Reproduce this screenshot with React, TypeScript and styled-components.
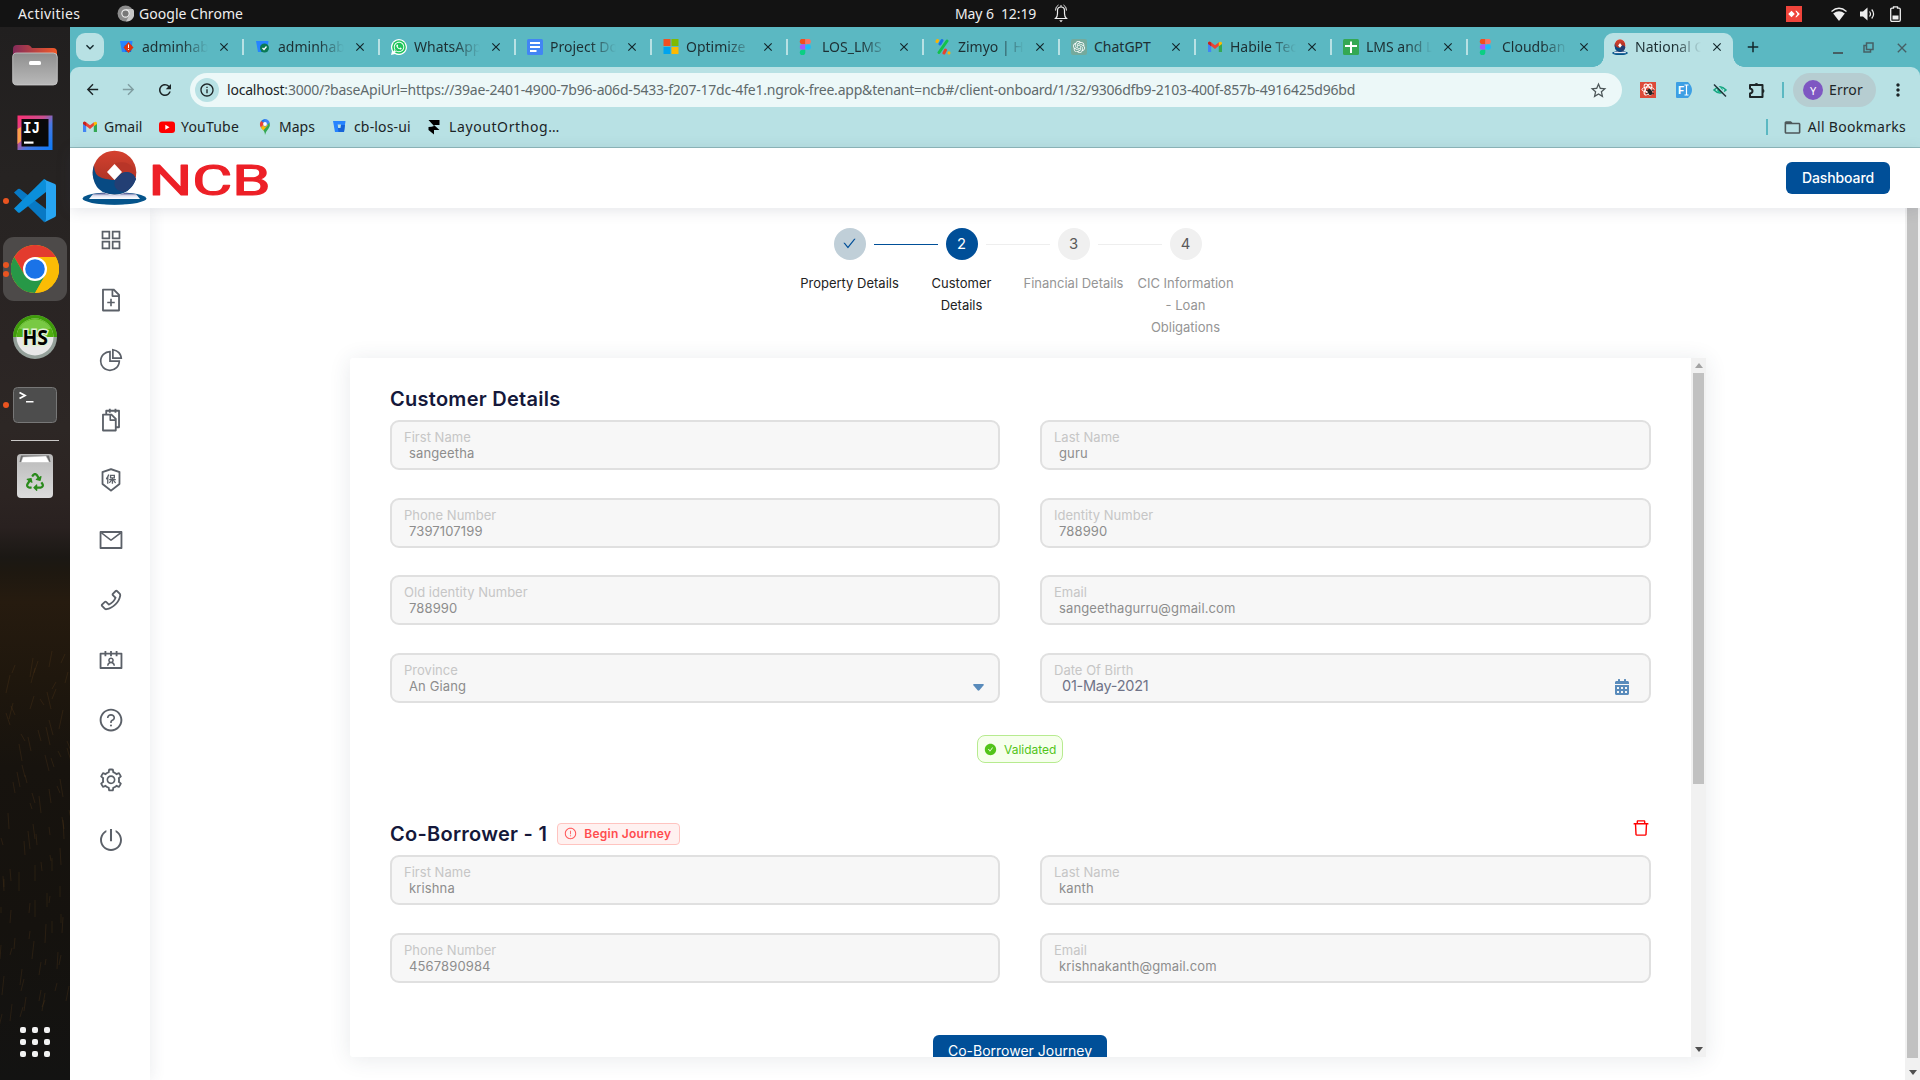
import React from 'react';
import styled, { createGlobalStyle, css } from 'styled-components';
import {
  AiOutlineAppstore, AiOutlineFileAdd, AiOutlinePieChart, AiOutlineSnippets, AiOutlineInsurance,
  AiOutlineMail, AiOutlinePhone, AiOutlineContacts, AiOutlineQuestionCircle, AiOutlineSetting,
  AiOutlinePoweroff, AiOutlineDelete, AiOutlineCheck, AiFillCheckCircle, AiOutlineExclamationCircle,
} from 'react-icons/ai';
import {
  MdArrowBack, MdArrowForward, MdRefresh, MdInfoOutline, MdStarBorder, MdMoreVert,
  MdOutlineExtension, MdClose, MdAdd, MdKeyboardArrowDown, MdFolderOpen,
} from 'react-icons/md';
import { FaCalendarAlt, FaRecycle, FaWhatsapp } from 'react-icons/fa';
import { SiOpenai } from 'react-icons/si';

const uiFont = '"Noto Sans", "Open Sans", sans-serif';
const appFont = 'Inter, Roboto, sans-serif';
const navy = '#004f98';

const GlobalStyle = createGlobalStyle`
  * { box-sizing: border-box; }
  body { margin: 0; background: #fff; overflow: hidden; }
  svg { display: block; flex: none; }
`;

const Desktop = styled.div`
  width: 1920px;
  height: 1080px;
  display: grid;
  grid-template: 27px 1053px / 70px 1850px;
  overflow: hidden;
  font-family: ${uiFont};
`;

/* ---------- System bar ---------- */
const SystemBar = styled.header`
  grid-column: 1 / 3;
  display: grid;
  grid-template-columns: 955px 1fr auto;
  align-items: center;
  background: #131313;
  color: #eeeeee;
`;
const BarGroup = styled.div<{ $pad?: string; $gap?: number }>`
  display: flex;
  align-items: center;
  gap: ${p => p.$gap ?? 0}px;
  padding: ${p => p.$pad ?? '0'};
`;
const Label = styled.span<{ $track?: number; $width?: number; $ml?: number }>`
  flex: none;
  margin-left: ${p => p.$ml ?? 0}px;
  font-size: 14px;
  line-height: 20px;
  letter-spacing: ${p => p.$track ?? 0}px;
  white-space: pre;
  ${p => p.$width && css`width: ${p.$width}px;`}
`;

/* ---------- Dock ---------- */
const Dock = styled.aside`
  position: relative;
  display: flex;
  flex-direction: column;
  align-items: center;
  background: linear-gradient(#211f1f 0, #262322 150px, #2b2524 320px, #2d2725 400px, #2c2422 470px, #292120 500px, #1b1814 530px, #1e1810 545px, #261b0f 575px, #1f170d 650px, #17130e 740px, #15120e 900px, #131312 1053px);
`;
const Backdrop = styled.svg`
  position: absolute;
  inset: 0;
`;
const DockItem = styled.div<{ $h: number; $active?: boolean; $mt?: number }>`
  position: relative;
  display: flex;
  align-items: center;
  justify-content: center;
  width: 64px;
  height: ${p => p.$h}px;
  margin-top: ${p => p.$mt ?? 0}px;
  border-radius: 11px;
  background: ${p => (p.$active ? '#4d4a49' : 'transparent')};
`;
const RunDots = styled.div`
  position: absolute;
  left: 0;
  top: 0;
  height: 100%;
  display: flex;
  flex-direction: column;
  justify-content: center;
  gap: 3px;
`;
const RunDot = styled.i`
  width: 6px;
  height: 6px;
  border-radius: 50%;
  background: #e95420;
`;
const DockRule = styled.hr`
  width: 48px;
  height: 1px;
  margin: 3px 0 0;
  border: 0;
  background: #c9c7c6;
`;
const AppsGrid = styled.div`
  position: relative;
  display: grid;
  grid-template-columns: repeat(3, 6px);
  gap: 6px;
  margin: auto 0 23px;
  i { height: 6px; border-radius: 2px; background: #f2f2f2; }
`;

/* ---------- Browser chrome ---------- */
const Browser = styled.div`
  display: flex;
  flex-direction: column;
  min-width: 0;
  background: #5bb8c2;
`;
const TabStrip = styled.div`
  display: flex;
  height: 40px;
  padding: 6px 0 0 6px;
`;
const TabMenu = styled.button`
  display: grid;
  place-items: center;
  width: 28px;
  height: 28px;
  margin-right: 4px;
  padding: 0;
  border: 0;
  border-radius: 9px;
  background: #b8e1e4;
`;
const Tab = styled.div<{ $active?: boolean; $last?: boolean }>`
  position: relative;
  display: flex;
  align-items: center;
  width: ${p => (p.$active ? 129 : 136)}px;
  height: ${p => (p.$active ? 34 : 28)}px;
  padding: ${p => (p.$active ? '0 0 6px 8px' : '0 0 0 11px')};
  border-right: 2px solid transparent;
  border-image: ${p => (p.$active || p.$last ? 'none' : 'linear-gradient(transparent 6px, #b8e1e4 6px, #b8e1e4 22px, transparent 22px) 0 2 0 0')};
  ${p => p.$active && css`
    border: 0;
    border-radius: 9px 9px 0 0;
    background: #b8e1e4;
    &::before, &::after {
      content: '';
      position: absolute;
      bottom: 0;
      width: 11px;
      height: 11px;
    }
    &::before { left: -11px; background: radial-gradient(circle at 0 0, transparent 10.5px, #b8e1e4 11px); }
    &::after { right: -11px; background: radial-gradient(circle at 100% 0, transparent 10.5px, #b8e1e4 11px); }
  `}
`;
const TabTitle = styled.span<{ $whole?: boolean }>`
  width: 67px;
  margin-left: 7px;
  overflow: hidden;
  white-space: nowrap;
  color: #1d2f33;
  font-size: 14px;
  line-height: 20px;
  mask-image: ${p => (p.$whole ? 'none' : 'linear-gradient(90deg, #000 40px, transparent 66px)')};
`;
const TabClose = styled(MdClose)`
  margin-left: 8px;
  width: 14px;
  height: 14px;
  color: #13272b;
`;
const Toolbar = styled.div`
  display: flex;
  align-items: center;
  height: 46px;
  padding: 0 12px 0 14px;
  background: #b8e1e4;
  border-radius: 9px 9px 0 0;
  color: #1d2527;
`;
const NavIcon = styled.div<{ $dim?: boolean }>`
  width: 36px;
  padding-bottom: 1px;
  color: ${p => (p.$dim ? '#7f9da0' : '#1b2426')};
`;
const AddressBar = styled.div`
  display: flex;
  align-items: center;
  width: 1432px;
  height: 34px;
  margin-left: -2px;
  padding: 0 14px 0 5px;
  border-radius: 17px;
  background: #ecf8f8;
`;
const SiteInfo = styled.div`
  display: grid;
  place-items: center;
  width: 24px;
  height: 24px;
  margin-right: 8px;
  border-radius: 50%;
  background: #b8e1e4;
`;
const Url = styled.span`
  flex: 1;
  padding-bottom: 2px;
  color: #5f6a6c;
  font-size: 14px;
  letter-spacing: -0.203px;
  white-space: nowrap;
  b { font-weight: 400; color: #1b2426; }
`;
const Extensions = styled.div`
  display: flex;
  align-items: center;
  gap: 20px;
  margin-left: 18px;
`;
const Pipe = styled.i<{ $m?: string }>`
  width: 2px;
  height: 16px;
  margin: ${p => p.$m ?? '0'};
  background: #5bb8c2;
`;
const Profile = styled.div`
  display: flex;
  align-items: center;
  gap: 6px;
  width: 83px;
  height: 34px;
  margin-right: 12px;
  padding-left: 10px;
  border-radius: 17px;
  background: #b6cdd1;
`;
const Avatar = styled.span`
  display: grid;
  place-items: center;
  width: 20px;
  height: 20px;
  border-radius: 50%;
  background: #7e57c2;
  color: #fff;
  font-size: 11px;
`;
const Bookmarks = styled.nav`
  display: flex;
  align-items: center;
  height: 35px;
  padding: 0 14px 6px 12px;
  background: #b8e1e4;
  border-bottom: 1px solid #8fb8bb;
  color: #1b2426;
`;
const Bookmark = styled.a<{ $w: number }>`
  display: grid;
  grid-template-columns: 22px 1fr;
  align-items: center;
  width: ${p => p.$w}px;
`;
const WindowControls = styled.div`
  display: flex;
  align-items: center;
  gap: 20px;
  height: 29px;
  margin: 0 10px 0 auto;
  color: #465f64;
`;

/* ---------- App page ---------- */
const Page = styled.div`
  display: flex;
  flex-direction: column;
  flex: 1;
  min-height: 0;
  background: #fff;
  font-family: ${appFont};
`;
const AppHeader = styled.header`
  position: relative;
  z-index: 2;
  display: flex;
  align-items: center;
  justify-content: space-between;
  height: 60px;
  padding: 0 30px 0 12px;
  background: #fff;
  box-shadow: 0 2px 14px rgba(55, 65, 90, 0.14);
`;
const PrimaryButton = styled.button<{ $w: number; $strong?: boolean; $inForm?: boolean }>`
  width: ${p => p.$w}px;
  height: 32px;
  padding: 0;
  border: 0;
  border-radius: 6px;
  background: ${navy};
  color: #fff;
  font: ${p => (p.$strong ? 500 : 400)} 14px/20px ${appFont};
  letter-spacing: ${p => (p.$strong ? -0.1 : 0)}px;
  white-space: nowrap;
  ${p => p.$inForm && css`
    flex: none;
    align-self: center;
    margin: 52.3px 1px 0 0;
  `}
`;
const Body = styled.div`
  display: grid;
  grid-template-columns: 80px 1fr 15px;
  flex: 1;
  min-height: 0;
`;
const SideNav = styled.nav`
  display: flex;
  flex-direction: column;
  align-items: center;
  gap: 34px;
  padding: 19px 0 0 1px;
  color: #5b6068;
  box-shadow: 2px 0 14px rgba(55, 65, 90, 0.09);
`;
const Main = styled.main`
  padding: 20px 0 0 200px;
  overflow: hidden;
`;
const Stepper = styled.section`
  height: 130px;
  padding-left: 449.5px;
`;
const StepTrack = styled.div`
  display: flex;
  align-items: center;
  gap: 8px;
  padding-left: 34px;
`;
type StepState = 'done' | 'current' | 'todo';
const StepBall = styled.div<{ $state: StepState }>`
  display: grid;
  place-items: center;
  width: 32px;
  height: 32px;
  padding-bottom: 1px;
  border-radius: 50%;
  font-size: 14.8px;
  background: ${p => ({ done: '#c0cfd8', current: navy, todo: '#f0f0f0' })[p.$state]};
  color: ${p => ({ done: navy, current: '#fff', todo: '#5a5a5a' })[p.$state]};
`;
const StepLine = styled.i<{ $on?: boolean }>`
  width: 64px;
  height: 1px;
  background: ${p => (p.$on ? navy : '#eeeeee')};
`;
const StepLabels = styled.div`
  display: grid;
  grid-template-columns: repeat(4, 100px);
  column-gap: 12px;
  margin-top: 12px;
`;
const StepLabel = styled.span<{ $dim?: boolean }>`
  color: ${p => (p.$dim ? '#959595' : '#222222')};
  font-size: 13px;
  line-height: 22px;
  letter-spacing: 0;
  text-align: center;
  white-space: pre;
`;
const Card = styled.section`
  display: grid;
  grid-template-columns: 1341px 15px;
  width: 1356px;
  height: 699px;
  border-radius: 3px;
  background: #fff;
  box-shadow: 0 2px 22px rgba(50, 60, 80, 0.11);
`;
const Form = styled.div`
  height: 699px;
  padding: 26px 40px 0;
  overflow: hidden;
  display: flex;
  flex-direction: column;
`;
const SectionHead = styled.div<{ $mt?: number }>`
  display: flex;
  align-items: center;
  flex: none;
  height: 30px;
  margin: ${p => p.$mt ?? 0}px 0 6px;
`;
const SectionTitle = styled.h2`
  margin: 0;
  color: #15183a;
  font-size: 20px;
  font-weight: 600;
  line-height: 30px;
  letter-spacing: 0.27px;
`;
const Fields = styled.div`
  display: grid;
  grid-template-columns: 610px 611px;
  flex: none;
  gap: 27.5px 40px;
`;
const FieldBox = styled.label`
  display: flex;
  align-items: flex-end;
  justify-content: space-between;
  height: 50px;
  padding: 6px 19px 6.7px 12px;
  border: 2px solid #e0e0e0;
  border-radius: 9px;
  background: #f7f7f7;
`;
const FieldName = styled.span`
  display: block;
  color: #c6c6c6;
  font-size: 13px;
  line-height: 16px;
  letter-spacing: 0.02px;
`;
const FieldValue = styled.span<{ $date?: boolean }>`
  display: block;
  padding-left: ${p => (p.$date ? 8 : 5)}px;
  color: ${p => (p.$date ? '#6f7388' : '#8d8d8d')};
  font-size: ${p => (p.$date ? 14.5 : 13)}px;
  line-height: 16px;
  letter-spacing: ${p => (p.$date ? -0.25 : 0.13)}px;
`;
const CalendarSlot = styled.span`
  margin-bottom: -1px;
  color: #598bbb;
`;
const CaretSlot = styled.span`
  margin: 0 -5px 3px 0;
`;
const Tag = styled.span<{ $tone: 'ok' | 'warn' }>`
  display: flex;
  align-items: center;
  flex: none;
  font-size: 12px;
  white-space: nowrap;
  ${p => p.$tone === 'ok' ? css`
    align-self: center;
    gap: 7px;
    width: 86px;
    height: 28px;
    margin: 32.5px 1px 0 0;
    padding-left: 6px;
    border: 1px solid #b7eb8f;
    border-radius: 8px;
    background: #f6ffed;
    color: #52c41a;
  ` : css`
    gap: 7px;
    width: 123px;
    height: 22px;
    margin: -1px 0 0 10px;
    padding-left: 6px;
    border: 1px solid #ffc4c0;
    border-radius: 4px;
    background: #fff1f0;
    color: #ff4d4f;
    font-weight: 600;
    letter-spacing: 0.25px;
  `}
`;
const TrashSlot = styled.span`
  margin: -12px 0 0 auto;
  color: #ff0000;
`;
const Scrollbar = styled.div`
  display: flex;
  flex-direction: column;
  align-items: center;
  background: #f1f1f1;
`;
const Thumb = styled.i<{ $h: number; $mb: number }>`
  width: 11px;
  height: ${p => p.$h}px;
  margin-bottom: ${p => p.$mb}px;
  background: #c1c1c1;
`;
const ArrowCap = styled.div`
  display: grid;
  place-items: center;
  height: 15px;
`;

/* ---------- Drawn icons ---------- */
const Caret = ({ up, color }: { up?: boolean; color: string }) => (
  <svg width="8" height="5" viewBox="0 0 8 5"><path fill={color} d={up ? 'M0 5 4 0 8 5Z' : 'M0 0H8L4 5Z'} /></svg>
);
const FormCaret = () => (
  <svg width="11" height="7" viewBox="0 0 11 7"><path fill="#598bbb" d="M1 0H10Q11.3 .3 10.6 1.3L6.4 6.3Q5.5 7.2 4.6 6.3L.4 1.3Q-.3 .3 1 0Z" /></svg>
);
const FilesIcon = () => (
  <svg width="46" height="42" viewBox="0 0 46 42">
    <defs>
      <linearGradient id="fo"><stop offset="0" stopColor="#842b5a" /><stop offset="1" stopColor="#f15a29" /></linearGradient>
      <linearGradient id="ff" x2="0" y2="1"><stop offset="0" stopColor="#8f8f8f" /><stop offset="1" stopColor="#b9b9b9" /></linearGradient>
    </defs>
    <path fill="url(#fo)" d="M1 16V5Q1 1 5 1H16Q18 1 20 4H41Q45 4 45 8V16Z" />
    <rect x=".7" y="9" width="44.6" height="32" rx="4" fill="url(#ff)" stroke="#cbcbcb" strokeWidth=".8" />
    <rect x="17" y="17" width="12" height="4" rx="1.5" fill="#fff" />
  </svg>
);
const Ide = () => (
  <svg width="36" height="36" viewBox="0 0 36 36">
    <defs><linearGradient id="ij" x1="0" y1="0" x2="1" y2="1"><stop offset="0" stopColor="#fe2f72" /><stop offset=".4" stopColor="#c7508f" /><stop offset=".6" stopColor="#4a78e0" /><stop offset="1" stopColor="#087cfa" /></linearGradient></defs>
    <path fill="url(#ij)" d="M.500 .5H35.500V35H.500Z" /><path fill="#f9a04a" d="M.5 14 4 12V26L.5 29Z" />
    <path fill="#090909" d="M4.500 4H31.500V31.500H4.500Z" />
    <text x="6" y="18" fill="#fff" fontFamily="Liberation Mono, monospace" fontWeight="700" fontSize="16.500" textLength="17" lengthAdjust="spacingAndGlyphs">IJ</text>
    <path fill="#fff" d="M7 26.500H16.500V28.700H7Z" />
  </svg>
);
const VsCode = () => (
  <svg width="44" height="44" viewBox="0 0 44 44">
    <path fill="#0879c4" d="M1 13.500 5 10Q6 9.400 7 10L33 30V42L31 43Z" />
    <path fill="#0b8fdb" d="M1 29.500 5 33.500Q6 34.200 7 33.500L33 13V1L31 0Z" />
    <path fill="#27a5f2" d="M31 .5 42 5Q43 5.600 43 7V36Q43 37.400 42 38L31 43.500Q33 42.500 33 40V4Q33 1.500 31 .5Z" />
  </svg>
);
const Chrome = () => (
  <svg width="48" height="48" viewBox="0 0 48 48">
    <circle cx="24" cy="24" r="24" fill="#fbbc05" />
    <path fill="#e33b2e" d="M3.200 12A24 24 0 0 1 44.800 12H24L13.600 30Z" />
    <path fill="#279847" d="M3.200 12A24 24 0 0 0 24 48L34.400 30H24Q17 30 13.600 30Z" />
    <path fill="#fbbc05" d="M44.800 12A24 24 0 0 1 24 48L34.400 30Q37 20 24 12Z" />
    <circle cx="24" cy="24" r="12" fill="#fff" /><circle cx="24" cy="24" r="9.800" fill="#1a73e8" />
  </svg>
);
const HeidiIcon = () => (
  <svg width="46" height="46" viewBox="0 0 46 46">
    <circle cx="23" cy="23" r="22" fill="#94a09a" />
    <path fill="#3f9c0a" d="M1 23A22 22 0 0 1 45 23Z" />
    <circle cx="23" cy="23" r="18.500" fill="#e8e8e8" />
    <path fill="#4fae12" d="M4.500 23A18.500 18.500 0 0 1 41.500 23Z" />
    <path fill="#8ad45a" opacity=".7" d="M7 14.500A18.500 18.500 0 0 1 39 14.500Q23 20.500 7 14.500Z" />
    <text x="10.500" y="30.500" fontFamily="Open Sans, sans-serif" fontWeight="700" fontSize="20.500" stroke="#dff0d2" strokeWidth="3" paintOrder="stroke" textLength="25.500" lengthAdjust="spacingAndGlyphs">HS</text>
  </svg>
);
const TerminalIcon = () => (
  <svg width="44" height="36" viewBox="0 0 44 36">
    <rect x=".5" y=".5" width="43" height="35" rx="4" fill="#4d4d4d" stroke="#777" />
    <path d="M6.500 5.500 12 8.500 6.500 11.500" fill="none" stroke="#fff" strokeWidth="1.800" /><path fill="#fff" d="M13 14H20.500V15.500H13Z" />
  </svg>
);
const TrashBin = () => (
  <svg width="38" height="46" viewBox="0 0 38 46">
    <defs><linearGradient id="tb" x2="0" y2="1"><stop offset="0" stopColor="#b9b9b9" /><stop offset="1" stopColor="#dcdcdc" /></linearGradient></defs>
    <rect x="1" y="1" width="36" height="44" rx="4" fill="url(#tb)" />
    <path fill="#6e6e6e" d="M5 2.500H33L34.500 9H3.500Z" /><path fill="#fff" d="M7 4 30 3 33.500 9.500H5Z" stroke="#bbb" strokeWidth=".5" />
    <g transform="translate(10 20)"><FaRecycle size={18} color="#2a8a1c" /></g>
  </svg>
);
const SystemChrome = () => (
  <svg width="17" height="17" viewBox="0 0 17 17"><circle cx="8.500" cy="8.500" r="8" fill="#8b8b8b" /><path fill="#c6c6c6" d="M8.500 4H16A8 8 0 0 1 9 16.500L12.500 10Z" /><circle cx="8.500" cy="8.500" r="4.200" fill="#eee" /><circle cx="8.500" cy="8.500" r="3.100" fill="#777" /></svg>
);
const Bell = () => (
  <svg width="14" height="19" viewBox="0 0 14 19" fill="none" stroke="#eee"><path d="M1.500 14.500Q3.500 13 3.500 9.500V6.500Q3.500 3 7 3T10.500 6.500V9.500Q10.500 13 12.500 14.500Z" strokeWidth="1.200" /><path d="M1.500 6.500Q1.500 2.500 4.500 1M12.500 6.500Q12.500 2.500 9.500 1M7 3V1" /><path d="M5.200 16.200H8.800L7 18.200Z" fill="#eee" stroke="none" /></svg>
);
const Bucket = ({ badge }: { badge?: 'bad' | 'good' }) => (
  <svg width="16" height="16" viewBox="0 0 16 16">
    <path fill="#2684ff" d="M1 2H13.500L12 13H3Z" /><path fill="#1664d8" d="M5.500 6H13L12 13H6.500Z" />
    {!badge && <path fill="#b8e1e4" d="M5.600 5.500H9L8.500 9H6.100Z" />}
    {badge === 'bad' && <><path fill="#e1330a" d="M9.500 3 14.500 8.500 9.500 14 4.500 8.500Z" /><path fill="#fff" d="M9 5.500H10V9H9ZM9 10H10V11H9Z" /></>}
    {badge === 'good' && <><circle cx="9.500" cy="9" r="4.500" fill="#0a7a54" /><path d="M7.500 9 9 10.500 11.500 7.500" stroke="#fff" fill="none" strokeWidth="1.300" /></>}
  </svg>
);
const WhatsApp = () => (
  <svg width="16" height="16" viewBox="0 0 16 16"><path fill="#fff" d="M0 16 1 12A8 8 0 1 1 4 15Z" /><circle cx="8" cy="8" r="6.800" fill="#1fc45b" /><g transform="translate(2 2)"><FaWhatsapp size={12} color="#fff" /></g></svg>
);
const Docs = () => (<svg width="16" height="16" viewBox="0 0 16 16"><rect width="16" height="16" rx="1.500" fill="#4285f4" /><path fill="#fff" d="M3 3H13V5H3ZM3 7H13V9H3ZM3 11H9.500V13H3Z" /></svg>);
const Windows = () => (<svg width="16" height="16" viewBox="0 0 16 16"><path fill="#f25022" d="M.5 0H7.500V7H.5Z" /><path fill="#7fba00" d="M8.500 0H15.500V7H8.500Z" /><path fill="#00a4ef" d="M.5 8H7.500V15H.5Z" /><path fill="#ffb900" d="M8.500 8H15.500V15H8.500Z" /></svg>);
const Figma = () => (<svg width="16" height="16" viewBox="0 0 16 16"><g transform="translate(-2.500 -.8) scale(1.100)"><path fill="#f24e1e" d="M8 .5H5.500A2.500 2.500 0 0 0 5.500 5.500H8Z" /><path fill="#ff7262" d="M8 .5H10.500A2.500 2.500 0 0 1 10.500 5.500H8Z" /><path fill="#a259ff" d="M8 5.500H5.500A2.500 2.500 0 0 0 5.500 10.500H8Z" /><circle cx="10.500" cy="8" r="2.500" fill="#1abcfe" /><path fill="#0acf83" d="M8 10.500H5.500A2.500 2.500 0 1 0 8 13Z" /></g></svg>);
const Zimyo = () => (<svg width="16" height="16" viewBox="0 0 16 16" fill="none" strokeWidth="3" strokeLinecap="round"><path stroke="#ffb300" d="M2 2.500 2.500 1.600" /><path stroke="#1a73e8" d="M5 5 7 1.600" /><path stroke="#12c24a" d="M4 13.500 12 2" /><path stroke="#e8432e" d="M9 14 10.500 11" /><path stroke="#ffb300" d="M14 14V13.800" /></svg>);
const ChatIcon = () => (<svg width="16" height="16" viewBox="0 0 16 16"><rect width="16" height="16" rx="2" fill="#74aa9c" /><g transform="translate(2 2)"><SiOpenai size={12} color="#fff" /></g></svg>);
const Gmail = () => (<svg width="16" height="16" viewBox="0 0 16 16"><path fill="#4285f4" d="M1 4V13H4.200V6.800Z" /><path fill="#34a853" d="M11.800 6.800V13H15V4Z" /><path fill="#ea4335" d="M1 4.500V3.800Q2.200 1.700 4 3.200L8 6.200 12 3.200 13 5.800 8 10Z" /><path fill="#c5221f" d="M1 4.200Q1 3 2.300 2.700 3.400 2.700 4.200 3.400V7.200L1 4.900Z" /><path fill="#fbbc04" d="M11.800 3.400Q12.600 2.700 13.700 2.700 15 3 15 4.200V4.900L11.800 7.200Z" /></svg>);
const Sheets = () => (<svg width="16" height="16" viewBox="0 0 16 16"><rect width="16" height="16" rx="1.500" fill="#34a853" /><path fill="#fff" d="M2 6H14V8H9V14H7V8H2ZM7 2.500H9V6H7Z" /></svg>);
const YouTube = () => (<svg width="16" height="16" viewBox="0 0 16 16"><rect y="2.500" width="16" height="11.500" rx="3" fill="#f00" /><path fill="#fff" d="M6.300 5.800 10.500 8.200 6.300 10.700Z" /></svg>);
const MapsPin = () => (<svg width="16" height="16" viewBox="0 0 16 16"><path fill="#34a853" d="M8 16Q8 12 4 8.700L11.500 2 12.800 4.500Q13.500 7 11.500 9.600 9 12.500 8 16Z" /><path fill="#fbbc04" d="M4 8.800 9.800 2.500 11 6 6.300 11.500Z" /><path fill="#4285f4" d="M5 4 8 0Q11.500 .3 12.600 3.500L8 8Z" /><path fill="#ea4335" d="M3.800 8.500Q1.800 4.500 4.300 1.700L8 4.500Z" /><path fill="#1a73e8" d="M4.300 1.700Q6 0 8.500 0L5.800 3.500Z" /><circle cx="8" cy="5" r="1.900" fill="#fff" /></svg>);
const Framer = () => (<svg width="14" height="16" viewBox="0 0 14 16"><path d="M1.500 1H12.500V6H7L12.500 11H7V15.500L1.500 11V8Q5 8 7 7Z" /></svg>);
const BankMark = ({ w = 65, h = 55 }: { w?: number; h?: number }) => (
  <svg width={w} height={h} viewBox="0 0 65 55" preserveAspectRatio="none">
    <defs>
      <linearGradient id="bd" x2="0" y2="1"><stop offset="0" stopColor="#35397a" /><stop offset=".5" stopColor="#dfe3f2" /><stop offset="1" stopColor="#fff" /></linearGradient>
      <linearGradient id="br" x2="0" y2="1"><stop offset="0" stopColor="#d5412f" /><stop offset="1" stopColor="#9c2f22" /></linearGradient>
    </defs>
    <ellipse cx="32.500" cy="48.500" rx="32" ry="6.200" fill="#05548b" />
    <path fill="url(#bd)" d="M11 44Q32 41 54 44L58 49H7Z" />
    <path fill="#05548b" d="M4 49.500H61Q50 54.500 32.500 54.500T4 49.500Z" />
    <circle cx="32.500" cy="23" r="22.300" fill="#fff" />
    <circle cx="32.500" cy="22.500" r="21.800" fill="url(#br)" />
    <path fill="#b83528" d="M33 13Q46 10 51 18L54 27Q49 24 40 23Z" />
    <path fill="#074a83" d="M12 15Q12 26 20 28Q28 30 33 30Q38 22 45 22Q52 23 54 29Q48 45 32 44.500Q13 44 10.700 25 10.500 19 12 15Z" />
    <path fill="#233f74" d="M33 30Q38 22 45 22Q52 23 54 29Q50 39 42 42Q30 40 33 30Z" />
    <path fill="#fff" d="M32.500 14 40 22 32.500 30 25 22Z" />
  </svg>
);
const NcbLogo = () => (
  <svg width="188" height="56" viewBox="0 0 188 56">
    <BankMark />
    <text x="66.500" y="44.800" fill="#ed2027" stroke="#ed2027" strokeWidth="1.200" strokeLinejoin="round" fontFamily="Roboto, sans-serif" fontWeight="400" fontSize="42" textLength="122" lengthAdjust="spacingAndGlyphs">NCB</text>
  </svg>
);
const ReactExt = () => (<svg width="16" height="16" viewBox="0 0 16 16"><path fill="#dd4b39" d="M0 0H16V16H0Z" /><g fill="none" stroke="#fff"><ellipse cx="8" cy="7.500" rx="6" ry="2.500" /><ellipse cx="8" cy="7.500" rx="6" ry="2.500" transform="rotate(60 8 7.500)" /><ellipse cx="8" cy="7.500" rx="6" ry="2.500" transform="rotate(120 8 7.500)" /></g><ellipse cx="10" cy="10" rx="2" ry="3.300" fill="#222" transform="rotate(-20 10 10)" /><path stroke="#222" d="M6 8 14 12M6 12 14 8" /></svg>);
const FontExt = () => (<svg width="16" height="16" viewBox="0 0 16 16"><path fill="#3d9fe4" d="M1 0H12Q16 4 16 8T12 16H1Q0 16 0 15V1Q0 0 1 0Z" /><text x="2" y="12" fill="#fff" fontFamily="Roboto, sans-serif" fontWeight="700" fontSize="11">F</text><path fill="none" stroke="#fff" d="M8.500 3H12.500M10.500 3V13M8.500 13H12.500" strokeWidth="1.200" /></svg>);
const EyeExt = () => (<svg width="16" height="16" viewBox="0 0 16 16"><path fill="none" stroke="#14a37f" strokeWidth="1.600" d="M2 8Q8 1.500 14 8 8 14 2 8Z" /><circle cx="8" cy="8" r="2.800" fill="#14b88a" /><path stroke="#b8e1e4" strokeWidth="1.500" d="M3.500 2 15.500 14" /><path stroke="#25343a" strokeWidth="1.500" d="M2 2.500 14 14.500" /></svg>);
const Puzzle = () => (<svg width="18" height="18" viewBox="0 0 18 18" fill="none" stroke="#1d2527" strokeWidth="2" strokeLinejoin="round"><path d="M2 4H14.500V16H2V12.500Q4.500 12 4.500 10T2 7.500Z" /><path fill="#1d2527" stroke="none" d="M6.300 3.500A2.200 2.200 0 0 1 10.500 3.500ZM15 8A2.100 2.100 0 0 1 15 12Z" /></svg>);
const AnyDesk = () => (<svg width="16" height="16" viewBox="0 0 16 16"><path fill="#ef443b" d="M0 0H16V16H0Z" /><path fill="#fff" d="M5.500 4.700 8.800 8 5.500 11.300 2.200 8ZM9.300 4.700H10.500L13.800 8 10.500 11.300H9.300L11.500 8Z" /></svg>);
const Wifi = () => (<svg width="16" height="14" viewBox="0 0 16 14"><path fill="#eee" d="M8 14 2.200 6.500Q8 2 13.800 6.500Z" /><path fill="none" stroke="#eee" strokeWidth="1.300" d="M.5 4.500Q8-2 15.500 4.500" /></svg>);
const Volume = () => (<svg width="16" height="14" viewBox="0 0 16 14"><path fill="#eee" d="M0 4.500H3L7.500 .5V13.500L3 9.500H0Z" /><path fill="none" stroke="#eee" strokeWidth="1.200" d="M9.500 4.500Q11.500 7 9.500 9.500M11.700 2.500Q15.500 7 11.700 11.500" /></svg>);
const Battery = () => (<svg width="11" height="16" viewBox="0 0 11 16"><path fill="none" stroke="#eee" strokeWidth="1.300" d="M3.500 2.200V.8H7.500V2.200H9Q10.300 2.200 10.300 3.500V14Q10.300 15.300 9 15.300H2Q.7 15.300 .7 14V3.500Q.7 2.200 2 2.200Z" /><path fill="#eee" d="M2.500 9.500H8.500V13.500H2.500Z" /></svg>);

const tabs: { title: string; icon: React.ReactNode; active?: boolean; whole?: boolean }[] = [
  { title: 'adminhab', icon: <Bucket badge="bad" /> },
  { title: 'adminhab', icon: <Bucket badge="good" /> },
  { title: 'WhatsApp', icon: <WhatsApp /> },
  { title: 'Project Do', icon: <Docs /> },
  { title: 'Optimize', icon: <Windows /> },
  { title: 'LOS_LMS', icon: <Figma /> },
  { title: 'Zimyo | H', icon: <Zimyo /> },
  { title: 'ChatGPT', icon: <ChatIcon />, whole: true },
  { title: 'Habile Tec', icon: <Gmail /> },
  { title: 'LMS and L', icon: <Sheets /> },
  { title: 'Cloudban', icon: <Figma /> },
  { title: 'National C', icon: <BankMark w={16} h={16} />, active: true },
];

const sideIcons = [
  AiOutlineAppstore, AiOutlineFileAdd, AiOutlinePieChart, AiOutlineSnippets, AiOutlineInsurance, AiOutlineMail,
  AiOutlinePhone, AiOutlineContacts, AiOutlineQuestionCircle, AiOutlineSetting, AiOutlinePoweroff,
];

const customer = [
  ['First Name', 'sangeetha'], ['Last Name', 'guru'],
  ['Phone Number', '7397107199'], ['Identity Number', '788990'],
  ['Old identity Number', '788990'], ['Email', 'sangeethagurru@gmail.com'],
  ['Province', 'An Giang', 'select'], ['Date Of Birth', '01-May-2021', 'date'],
];
const coBorrower = [
  ['First Name', 'krishna'], ['Last Name', 'kanth'],
  ['Phone Number', '4567890984'], ['Email', 'krishnakanth@gmail.com'],
];

const FieldSet = ({ items }: { items: string[][] }) => (
  <Fields>
    {items.map(([name, value, kind]) => (
      <FieldBox key={name}>
        <span><FieldName>{name}</FieldName><FieldValue $date={kind === 'date'}>{value}</FieldValue></span>
        {kind === 'select' && <CaretSlot><FormCaret /></CaretSlot>}
        {kind === 'date' && <CalendarSlot><FaCalendarAlt size={16} /></CalendarSlot>}
      </FieldBox>
    ))}
  </Fields>
);

const grass = Array.from({ length: 90 }, (_, i) => {
  const x = (i * 37 + ((i * i) % 23)) % 70;
  const y = 620 + ((i * 83) % 370);
  return `M${x} ${y}l${((i * 7) % 9) - 4} ${6 + ((i * 5) % 14)}`;
}).join('');

export default function App() {
  return (
    <Desktop>
      <GlobalStyle />
      <SystemBar>
        <BarGroup $pad="0 0 0 18px">
          <Label $width={99} $track={0.4}>Activities</Label>
          <SystemChrome />
          <Label $ml={5} $track={0.05}>Google Chrome</Label>
        </BarGroup>
        <BarGroup $gap={18}><Label $track={-0.1}>May 6  12:19</Label><Bell /></BarGroup>
        <BarGroup $pad="0 19.5px 0 0" $gap={13.5}>
          <AnyDesk /><Label $width={2} /><Wifi /><Volume /><Battery />
        </BarGroup>
      </SystemBar>

      <Dock>
        <Backdrop width="70" height="1053"><path d={grass} stroke="#5a3c1c" strokeWidth="1" opacity=".3" fill="none" /></Backdrop>
        <DockItem $h={64} $mt={6}><FilesIcon /></DockItem>
        <DockItem $h={64} $mt={4}><Ide /></DockItem>
        <DockItem $h={64} $mt={4}><RunDots><RunDot /></RunDots><VsCode /></DockItem>
        <DockItem $h={64} $mt={4} $active><RunDots><RunDot /><RunDot /></RunDots><Chrome /></DockItem>
        <DockItem $h={64} $mt={4}><HeidiIcon /></DockItem>
        <DockItem $h={64} $mt={4}><RunDots><RunDot /></RunDots><TerminalIcon /></DockItem>
        <DockRule />
        <DockItem $h={64} $mt={3}><TrashBin /></DockItem>
        <AppsGrid>{Array.from({ length: 9 }, (_, i) => <i key={i} />)}</AppsGrid>
      </Dock>

      <Browser>
        <TabStrip>
          <TabMenu><MdKeyboardArrowDown size={16} color="#13272b" /></TabMenu>
          {tabs.map((t, i) => (
            <Tab key={i} $active={t.active} $last={i === 10}>
              {t.icon}
              <TabTitle $whole={t.whole}>{t.title}</TabTitle>
              <TabClose />
            </Tab>
          ))}
          <BarGroup $pad="0 0 6px 11px"><MdAdd size={18} color="#13272b" /></BarGroup>
          <WindowControls>
            <svg width="10" height="12" viewBox="0 0 10 12"><path fill="currentColor" d="M0 10H10V12H0Z" /></svg>
            <svg width="11" height="11" viewBox="0 0 11 11" fill="none" stroke="currentColor" strokeWidth="1.500"><path d="M3.500 1H10V7.500H3.500ZM3 3.500H1V10H7.500V8" /></svg>
            <MdClose size={16} />
          </WindowControls>
        </TabStrip>
        <Toolbar>
          <NavIcon><MdArrowBack size={17} /></NavIcon>
          <NavIcon $dim><MdArrowForward size={17} /></NavIcon>
          <NavIcon><MdRefresh size={18} /></NavIcon>
          <AddressBar>
            <SiteInfo><MdInfoOutline size={16} /></SiteInfo>
            <Url><b>localhost</b>:3000/?baseApiUrl=https://39ae-2401-4900-7b96-a06d-5433-f207-17dc-4fe1.ngrok-free.app&amp;tenant=ncb#/client-onboard/1/32/9306dfb9-2103-400f-857b-4916425d96bd</Url>
            <MdStarBorder size={19} color="#4d5759" />
          </AddressBar>
          <Extensions><ReactExt /><FontExt /><EyeExt /><Puzzle /></Extensions>
          <Pipe $m="0 9px 0 16px" />
          <Profile><Avatar>Y</Avatar><Label $track={0.1}>Error</Label></Profile>
          <MdMoreVert size={20} />
        </Toolbar>
        <Bookmarks>
          <Bookmark $w={77}><Gmail /><Label>Gmail</Label></Bookmark>
          <Bookmark $w={98}><YouTube /><Label $track={0.2}>YouTube</Label></Bookmark>
          <Bookmark $w={75}><MapsPin /><Label>Maps</Label></Bookmark>
          <Bookmark $w={95}><Bucket /><Label $track={0.15}>cb-los-ui</Label></Bookmark>
          <Bookmark $w={140}><Framer /><Label $track={0.6}>LayoutOrthog…</Label></Bookmark>
          <Pipe $m="0 15px 0 auto" />
          <MdFolderOpen size={19} color="#4d5759" />
          <Label $ml={6} $track={0.3}>All Bookmarks</Label>
        </Bookmarks>

        <Page>
          <AppHeader>
            <NcbLogo />
            <PrimaryButton $w={104} $strong>Dashboard</PrimaryButton>
          </AppHeader>
          <Body>
            <SideNav>{sideIcons.map((Icon, i) => <Icon key={i} size={26} />)}</SideNav>
            <Main>
              <Stepper>
                <StepTrack>
                  <StepBall $state="done"><AiOutlineCheck size={15} /></StepBall><StepLine $on />
                  <StepBall $state="current">2</StepBall><StepLine />
                  <StepBall $state="todo">3</StepBall><StepLine />
                  <StepBall $state="todo">4</StepBall>
                </StepTrack>
                <StepLabels>
                  <StepLabel>Property Details</StepLabel>
                  <StepLabel>{'Customer\nDetails'}</StepLabel>
                  <StepLabel $dim>Financial Details</StepLabel>
                  <StepLabel $dim>{'CIC Information\n- Loan\nObligations'}</StepLabel>
                </StepLabels>
              </Stepper>
              <Card>
                <Form>
                  <SectionHead><SectionTitle>Customer Details</SectionTitle></SectionHead>
                  <FieldSet items={customer} />
                  <Tag $tone="ok"><AiFillCheckCircle size={13} />Validated</Tag>
                  <SectionHead $mt={56}>
                    <SectionTitle>Co-Borrower - 1</SectionTitle>
                    <Tag $tone="warn"><AiOutlineExclamationCircle size={13} />Begin Journey</Tag>
                    <TrashSlot><AiOutlineDelete size={20} /></TrashSlot>
                  </SectionHead>
                  <FieldSet items={coBorrower} />
                  <PrimaryButton $w={174} $inForm>Co-Borrower Journey</PrimaryButton>
                </Form>
                <Scrollbar>
                  <ArrowCap><Caret up color="#a3a3a3" /></ArrowCap>
                  <Thumb $h={411} $mb={258} />
                  <ArrowCap><Caret color="#505050" /></ArrowCap>
                </Scrollbar>
              </Card>
            </Main>
            <Scrollbar>
              <Thumb $h={850} $mb={7} />
              <ArrowCap><Caret color="#505050" /></ArrowCap>
            </Scrollbar>
          </Body>
        </Page>
      </Browser>
    </Desktop>
  );
}
